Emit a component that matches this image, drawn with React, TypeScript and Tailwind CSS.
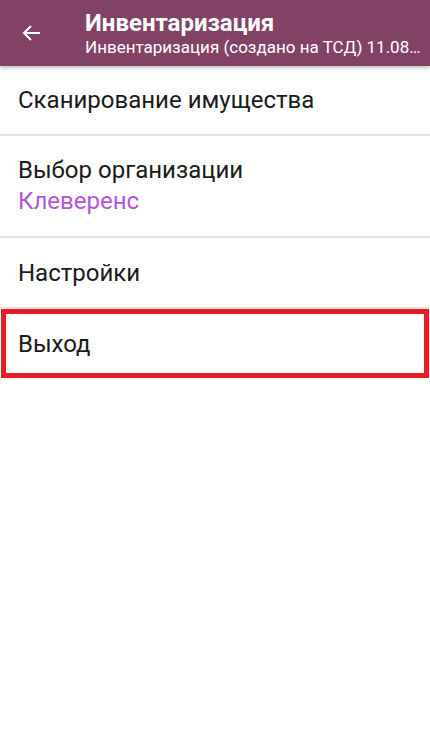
export default function App() {
  return (
    <div className="flex h-[739px] w-[430px] flex-col bg-white font-['Roboto',sans-serif]">
      <header className="relative z-10 flex h-[66px] shrink-0 items-center bg-[#824266] shadow-[0_2px_4px_rgba(0,0,0,0.25)]">
        <div className="flex w-[85px] shrink-0 items-center pl-[22px]">
          <svg width="19" height="16" viewBox="0 0 19 16" fill="none" stroke="white" strokeWidth="2">
            <path d="M18 8H2" />
            <path d="M9 1L2 8l7 7" />
          </svg>
        </div>
        <div className="min-w-0 flex-1 text-white">
          <div className="text-[24px] leading-[28px] font-bold">Инвентаризация</div>
          <div className="whitespace-nowrap text-[17px] leading-[20px]">Инвентаризация (создано на ТСД) 11.08…</div>
        </div>
      </header>

      <div className="flex h-[68px] items-center px-[18px] text-[24px] text-[#1a1a1a]">Сканирование имущества</div>
      <div className="h-[2px] bg-[#e3e3e3]" />
      <div className="flex h-[100px] flex-col justify-center px-[18px] text-[24px] leading-[31px]">
        <div className="text-[#1a1a1a]">Выбор организации</div>
        <div className="text-[#b455d8]">Клеверенс</div>
      </div>
      <div className="h-[2px] bg-[#e3e3e3]" />
      <div className="flex h-[69px] items-center px-[18px] text-[24px] text-[#1a1a1a]">Настройки</div>
      <div className="h-[2px] bg-[#e3e3e3]" />
      <div className="mx-px flex h-[69px] items-center border-[5px] border-[#ed1c24] px-[12px] text-[24px] text-[#1a1a1a]">Выход</div>
    </div>
  );
}
